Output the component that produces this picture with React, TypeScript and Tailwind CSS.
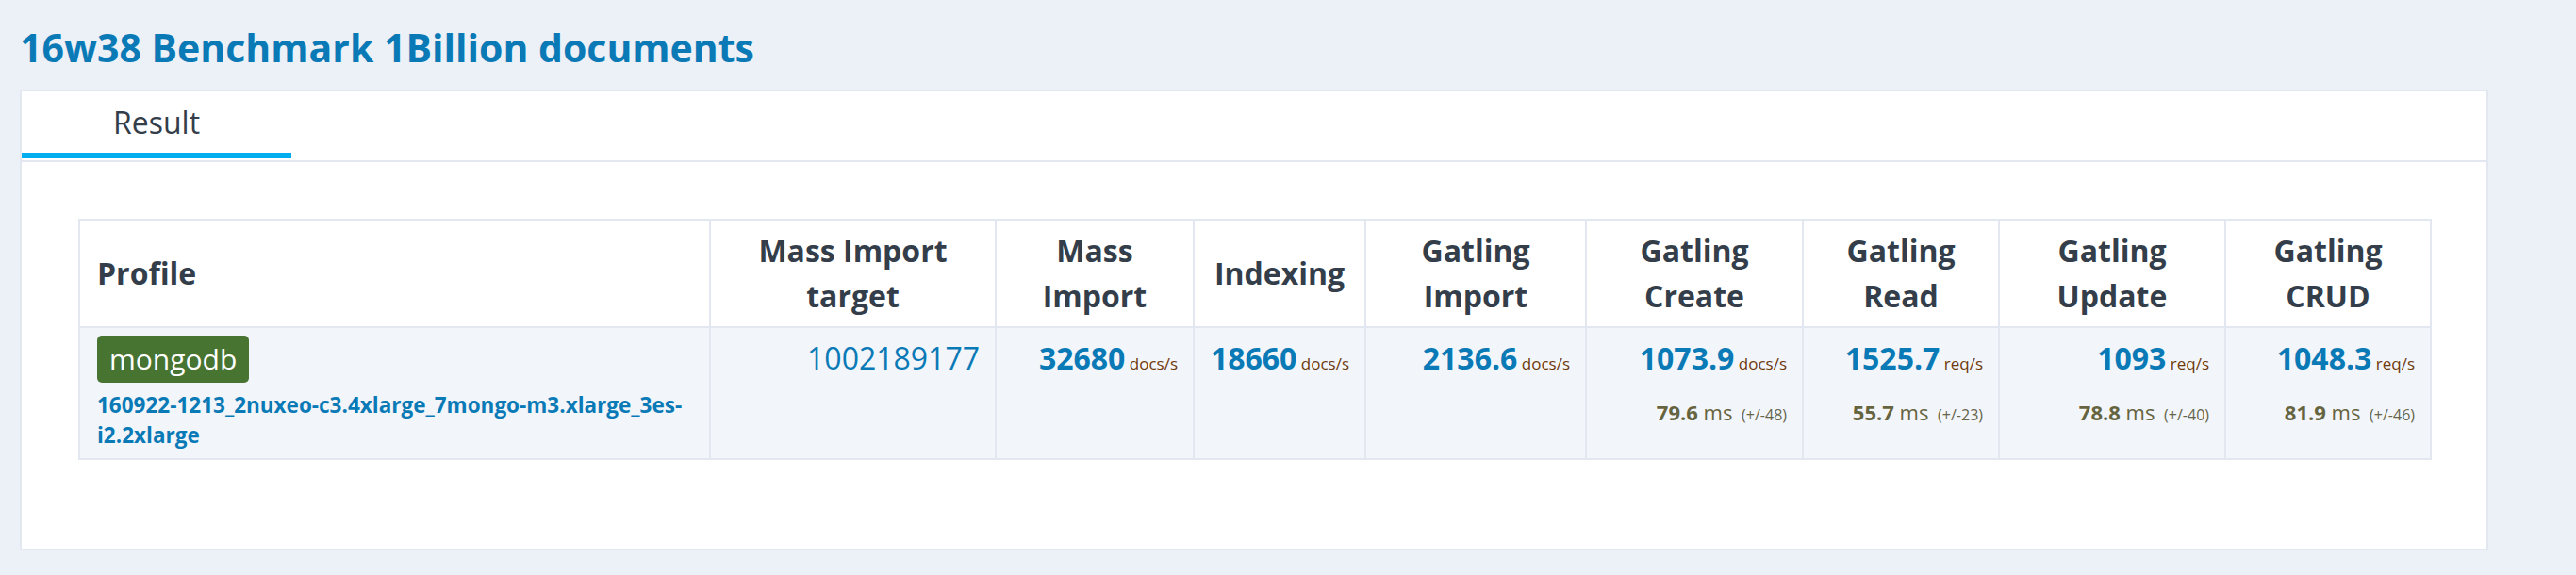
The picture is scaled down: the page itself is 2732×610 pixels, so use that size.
import React from "react";

type Col = {
  width: number;
  value?: string;
  unit?: string;
  plain?: string;
  ms?: string;
  dev?: string;
};

const cols: Col[] = [
  { width: 303, plain: "1002189177" },
  { width: 210, value: "32680", unit: "docs/s" },
  { width: 182, value: "18660", unit: "docs/s" },
  { width: 234, value: "2136.6", unit: "docs/s" },
  { width: 230, value: "1073.9", unit: "docs/s", ms: "79.6", dev: "(+/-48)" },
  { width: 208, value: "1525.7", unit: "req/s", ms: "55.7", dev: "(+/-23)" },
  { width: 240, value: "1093", unit: "req/s", ms: "78.8", dev: "(+/-40)" },
  { width: 218, value: "1048.3", unit: "req/s", ms: "81.9", dev: "(+/-46)" },
];

const headerTitles: React.ReactNode[] = [
  <>Mass Import<br />target</>,
  <>Mass<br />Import</>,
  <>Indexing</>,
  <>Gatling<br />Import</>,
  <>Gatling<br />Create</>,
  <>Gatling<br />Read</>,
  <>Gatling<br />Update</>,
  <>Gatling<br />CRUD</>,
];

export default function App() {
  return (
    <div
      className="min-h-[610px] bg-[#ecf0f7] pl-[21px] pt-[22px]"
      style={{ fontFamily: '"Open Sans", "Noto Sans", sans-serif' }}
    >
      <h1 className="mb-[17px] text-[41px] leading-[56px] font-bold text-[#0a7ab6]">
        16w38 Benchmark 1Billion documents
      </h1>
      <div className="w-[2618px] border-2 border-[#e2e7f0] bg-white">
        <div className="flex border-b-2 border-[#e2e7f0]">
          <div className="flex w-[286px] flex-col items-stretch">
            <div className="pt-[9px] pb-[8px] text-center text-[32px] leading-[48px] text-[#343e4a]">
              Result
            </div>
            <div className="h-[6px] bg-[#00aeef]" />
            <div className="h-[2px]" />
          </div>
        </div>
        <div className="px-[60px] pt-[60px] pb-[94px]">
          <table className="w-[2494px] table-fixed border-collapse border-2 border-[#e2e7f0]">
            <colgroup>
              <col style={{ width: 669 }} />
              {cols.map((c, i) => (
                <col key={i} style={{ width: c.width }} />
              ))}
            </colgroup>
            <thead>
              <tr className="bg-white">
                <th className="border-2 border-[#e2e7f0] py-[8px] pl-[18px] pr-[16px] text-left align-middle text-[32px] leading-[48px] font-bold text-[#333e4a]">
                  Profile
                </th>
                {headerTitles.map((t, i) => (
                  <th
                    key={i}
                    className="border-2 border-[#e2e7f0] px-[12px] py-[8px] text-center align-middle text-[32px] leading-[48px] font-bold text-[#333e4a]"
                  >
                    {t}
                  </th>
                ))}
              </tr>
            </thead>
            <tbody>
              <tr className="bg-[#f2f5fa]">
                <td className="border-2 border-[#e2e7f0] pt-[8px] pb-[8px] pl-[18px] pr-[16px] align-top">
                  <div className="flex">
                    <span className="inline-block h-[50px] rounded-[5px] bg-[#487431] px-[13px] text-[30px] leading-[50px] text-white">
                      mongodb
                    </span>
                  </div>
                  <div className="mt-[8px] text-[22.5px] leading-[32px] font-bold text-[#0a7ab6]">
                    <span className="whitespace-nowrap">160922-1213_2nuxeo-c3.4xlarge_7mongo-m3.xlarge_3es-</span>
                    <br />
                    <span className="whitespace-nowrap">i2.2xlarge</span>
                  </div>
                </td>
                {cols.map((c, i) => (
                  <td
                    key={i}
                    className="border-2 border-[#e2e7f0] pt-[8px] pb-[8px] pl-[8px] pr-[16px] text-right align-top text-[32px] leading-[48px]"
                  >
                    <div className="whitespace-nowrap">
                      {c.plain ? (
                        <span className="text-[#0a7ab6]">{c.plain}</span>
                      ) : (
                        <>
                          <span className="font-bold text-[#0a7ab6]">{c.value}</span>
                          <span className="text-[17px] text-[#6e3a0c]"> {c.unit}</span>
                        </>
                      )}
                    </div>
                    {c.ms && (
                      <div className="whitespace-nowrap">
                        <span className="text-[22px] font-bold text-[#66643f]">{c.ms}</span>
                        <span className="text-[22px] text-[#66643f]"> ms </span>
                        <span className="ml-[4px] text-[16px] text-[#66654a]">{c.dev}</span>
                      </div>
                    )}
                  </td>
                ))}
              </tr>
            </tbody>
          </table>
        </div>
      </div>
    </div>
  );
}
